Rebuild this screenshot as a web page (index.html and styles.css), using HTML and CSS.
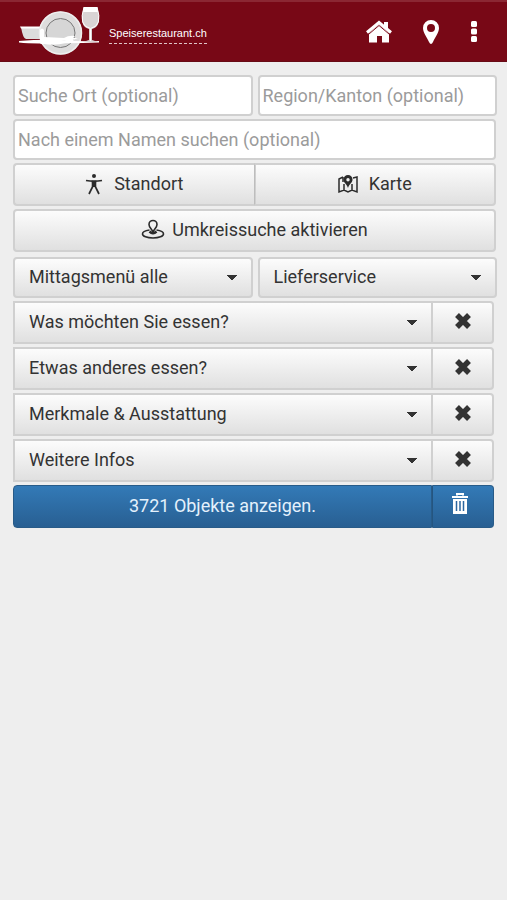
FILE: index.html
```html
<!DOCTYPE html>
<html lang="de">
<head>
<meta charset="utf-8">
<meta name="viewport" content="width=device-width, initial-scale=1">
<title>Speiserestaurant.ch</title>
<link rel="stylesheet" href="styles.css">
</head>
<body>
<svg class="sprite" aria-hidden="true">
  <symbol id="cross" viewBox="0 0 18 18"><path d="M3 3L15 15M15 3L3 15" stroke="currentColor" stroke-width="5.500"/></symbol>
</svg>
<header class="bar">
  <a class="brand" href="#">
    <svg class="logo" viewBox="0 0 84 52" aria-hidden="true">
      <path d="M2 21h21l-1 12H7q-3 0-5-12z" fill="#dcdcdc"/>
      <path d="M1 20.500h22v2H2z" fill="#fff"/>
      <circle cx="41.500" cy="27" r="21.500" fill="#dedddd"/>
      <circle cx="41.500" cy="27" r="21" fill="none" stroke="#eee" stroke-width="1.500"/>
      <circle cx="41.500" cy="27" r="14.500" fill="#d6d6d6" stroke="#777" stroke-width="1"/>
      <path d="M0 35q22-2 42-1 22 2 38 1v1.500q-26 1-42 .5-24 1-38-.5z" fill="#fff"/>
      <path d="M21 24q2-3 4 0v7l20 1q5-3 11-2l-2 2 5 0-5 2 2 2q-6 1-11-2H26l-1 4q-3 1-4-1z" fill="#fff"/>
      <path d="M25 36q13-2 22 1-11 3-22 1z" fill="#fff"/>
      <path d="M65 1h13q6 19-5 22v11l6 2H64l6-2V23q-11-3-5-22z" fill="#d9d4d5"/>
      <path d="M65 1h13l1 5H64z" fill="#fff"/>
      <path d="M65 1q-6 19 6.500 21.500Q84 20 78 1M71.500 23v12" fill="none" stroke="#fff" stroke-width="1"/>
    </svg>
    <span class="name">Speiserestaurant.ch</span>
  </a>
  <nav class="nav">
    <a href="#" aria-label="Startseite"><svg width="28" height="24" viewBox="0 0 28 24"><path d="M14 4.500L24 13v9.500h-7V16h-5v6.500H4V13z" fill="#fff"/><path d="M2 12.500L14 2.500l12 10" fill="none" stroke="#fff" stroke-width="3"/><path d="M19 2h4v7l-4-3z" fill="#fff"/><path d="M4 14L14 5.500 24 14" fill="none" stroke="#7c0716" stroke-width="1"/></svg></a>
    <a href="#" aria-label="Standort"><svg width="16" height="24" viewBox="0 0 16 24"><path fill="#fff" fill-rule="evenodd" d="M8 0a8 8 0 0 1 8 8c0 5-4 9-6 14q-2 4-4 0C4 17 0 13 0 8a8 8 0 0 1 8-8zM8 4a4 4 0 1 0 0 8 4 4 0 0 0 0-8z"/></svg></a>
    <button type="button" aria-label="Menü"><svg width="6" height="22" viewBox="0 0 6 22" fill="#fff"><rect width="6" height="6" rx="1.500"/><rect y="7.500" width="6" height="6" rx="1.500"/><rect y="15" width="6" height="6" rx="1.500"/></svg></button>
  </nav>
</header>
<main>
  <form class="search">
    <div class="pair">
      <input type="text" placeholder="Suche Ort (optional)" aria-label="Suche Ort">
      <input type="text" placeholder="Region/Kanton (optional)" aria-label="Region/Kanton">
    </div>
    <div class="inner"><input type="text" placeholder="Nach einem Namen suchen (optional)" aria-label="Name"></div>
    <div class="inner joined">
      <button type="button" class="btn"><svg width="18" height="22" viewBox="0 0 18 22"><circle cx="9" cy="3" r="2" fill="#2b2b2b"/><path d="M1 7.500q8 1.500 16 0M9 8v6M8 8l-.500 6L4 21M10 8l.500 6L14 21" fill="none" stroke="#2b2b2b" stroke-width="1.700"/><path d="M6.500 7.500h5l-.500 6H7z" fill="#2b2b2b"/></svg>Standort</button>
      <button type="button" class="btn"><svg width="20" height="20" viewBox="0 0 20 20" fill="none" stroke="#2b2b2b" stroke-width="1.500"><path d="M5 3L1 5v13l5-2 4 2 4-2 5 2V3l-4 1M6 10v6M14 10v6M5 3v5"/><path fill="#2b2b2b" stroke="none" fill-rule="evenodd" d="M10 1a4.500 4.500 0 0 1 4.500 4.500C14.500 9 11 10 10 14 9 10 5.500 9 5.500 5.500A4.500 4.500 0 0 1 10 1zm0 3a1.700 1.700 0 1 0 0 3.400A1.700 1.700 0 0 0 10 4z"/></svg>Karte</button>
    </div>
    <div class="inner">
      <button type="button" class="btn wide"><svg width="24" height="22" viewBox="0 0 24 22" fill="none" stroke="#2b2b2b" stroke-width="1.600"><path d="M8.500 11c-4 .500-7 1.700-7 4s4.500 4 10.500 4 10.500-1.700 10.500-4-3-3.500-7-4"/><path d="M12 13c-1-3-4-4.500-4-7.500a4 4 0 0 1 8 0c0 3-3 4.500-4 7.500z"/><path d="M8.500 12.500q3.500 3.500 7 0" stroke-width="2.500"/></svg>Umkreissuche aktivieren</button>
    </div>
    <div class="pair selects">
      <select aria-label="Mittagsmenü"><option>Mittagsmenü alle</option></select>
      <select aria-label="Lieferservice"><option>Lieferservice</option></select>
    </div>
    <div class="list">
      <div class="row"><button type="button" class="btn drop">Was möchten Sie essen?</button><button type="button" class="btn clear" aria-label="Auswahl löschen"><svg width="18" height="18"><use href="#cross"/></svg></button></div>
      <div class="row"><button type="button" class="btn drop">Etwas anderes essen?</button><button type="button" class="btn clear" aria-label="Auswahl löschen"><svg width="18" height="18"><use href="#cross"/></svg></button></div>
      <div class="row"><button type="button" class="btn drop">Merkmale &amp; Ausstattung</button><button type="button" class="btn clear" aria-label="Auswahl löschen"><svg width="18" height="18"><use href="#cross"/></svg></button></div>
      <div class="row"><button type="button" class="btn drop">Weitere Infos</button><button type="button" class="btn clear" aria-label="Auswahl löschen"><svg width="18" height="18"><use href="#cross"/></svg></button></div>
      <div class="row"><button type="submit" class="btn primary">3721 Objekte anzeigen.</button><button type="reset" class="btn primary trash" aria-label="Alles löschen"><svg width="16" height="22" viewBox="0 0 16 22"><path d="M5 2.500V1h6v1.500M0 4h16" fill="none" stroke="#fff" stroke-width="2"/><path d="M1 6h14v15H1z" fill="#fff"/><path d="M4.500 8v10M8 8v10M11.500 8v10" stroke="#2b669f" stroke-width="1.500"/></svg></button></div>
    </div>
  </form>
</main>
</body>
</html>
```
FILE: styles.css
```css
* { box-sizing: border-box; }
body {
  margin: 0;
  min-height: 100vh;
  background: #eeeeee;
  color: #333;
  font: 18px/26px Roboto, sans-serif;
}
button, input, select { font: inherit; color: inherit; margin: 0; }
.sprite { display: none; }

.bar {
  display: flex;
  align-items: center;
  justify-content: space-between;
  height: 62px;
  padding: 0 30px 0 19px;
  background: #780816;
  border-top: 2px solid #8b2733;
  border-bottom: 1px solid #680b16;
}
.brand {
  display: flex;
  align-items: center;
  gap: 6px;
  color: #fff;
  text-decoration: none;
}
.logo { width: 84px; height: 52px; }
.name {
  margin-top: 4px;
  font: 11px/20px "Liberation Sans", sans-serif;
  border-bottom: 1px dashed #e0c4c8;
}
.nav { display: flex; align-items: center; gap: 30px; }
.nav a, .nav button { display: flex; }
.nav button { padding: 0 0 0 2px; border: 0; background: none; }

.search {
  display: flex;
  flex-direction: column;
  gap: 3px;
  padding: 13px 10px 0 13px;
}
.pair { display: grid; grid-template-columns: 1fr 1fr; gap: 5px; }
.inner { display: flex; padding-right: 1px; }

input {
  width: 100%;
  min-width: 0;
  height: 41px;
  padding: 0 3px;
  background: #fff;
  border: 2px solid #d0d0d0;
  border-radius: 4px;
}
input::placeholder { color: #9b9b9b; opacity: 1; }

.btn, select {
  display: flex;
  align-items: center;
  justify-content: center;
  height: 43px;
  padding: 0 14px 2px;
  background: linear-gradient(#fcfcfc, #e0e0e0);
  border: 2px solid #d0d0d0;
  border-radius: 4px;
}
.btn { flex: 1; gap: 11px; }
.wide { gap: 7px; }
.joined .btn:first-child { border-radius: 4px 0 0 4px; border-right: 1px solid #bdbdbd; }
.joined .btn:last-child { border-radius: 0 4px 4px 0; border-left-width: 1px; }

.selects { padding-top: 2px; }
select { appearance: none; width: 100%; height: 41px; }
select, .drop {
  background:
    linear-gradient(to bottom left, #333 50%, transparent 52%) right 19px center / 5px 5px no-repeat,
    linear-gradient(to bottom right, #333 50%, transparent 52%) right 14px center / 5px 5px no-repeat,
    linear-gradient(#fcfcfc, #e0e0e0);
}

.list { display: flex; flex-direction: column; gap: 3px; padding-right: 3px; }
.row { display: flex; }
.row .btn:first-child { border-radius: 0; border-right-width: 1px; }
.row .btn:last-child {
  flex: 0 0 62px;
  padding: 0 0 4px;
  border-left-width: 1px;
  border-radius: 0 4px 4px 0;
}
.row .drop { justify-content: flex-start; }
.row .btn.primary {
  color: #e4f1fc;
  background: linear-gradient(#337ab7, #285f92);
  border: 1px solid #285b88;
}
.row .btn.primary:first-child { border-radius: 4px 0 0 4px; }
.row .btn.trash { border-left-color: #245580; padding: 0 6px 6px 0; }
```
